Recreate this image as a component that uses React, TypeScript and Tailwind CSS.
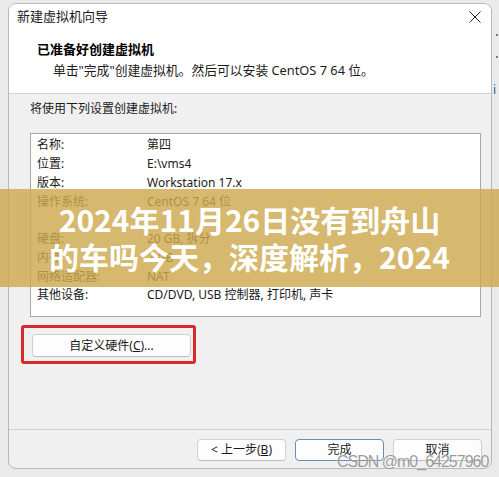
import React from "react";

const rows: [string, string][] = [
  ["名称:", "第四"],
  ["位置:", "E:\\vms4"],
  ["版本:", "Workstation 17.x"],
  ["操作系统:", "CentOS 7 64 位"],
  ["", ""],
  ["硬盘:", "20 GB, 拆分"],
  ["内存:", "2 GB"],
  ["网络适配器:", "NAT"],
  ["其他设备:", "CD/DVD, USB 控制器, 打印机, 声卡"],
];

function WinButton({ children, primary, className = "" }: { children: React.ReactNode; primary?: boolean; className?: string }) {
  return (
    <div
      className={`flex items-center justify-center rounded-[4px] border bg-[#fdfdfd] text-[12px] text-[#1b1b1b] ${
        primary ? "border-[#6a8cb3]" : "border-[#d0d0d0] border-b-[#bdbdbd]"
      } ${className}`}
    >
      {children}
    </div>
  );
}

export default function App() {
  return (
    <div
      className="relative h-[477px] w-[499px] overflow-hidden bg-[#eaeaea]"
      style={{ fontFamily: '"Noto Sans", "Noto Sans CJK SC", sans-serif' }}
    >
      {/* dialog */}
      <div className="ml-[8px] mt-[3px] flex h-[466px] w-[484px] flex-col overflow-hidden rounded-[8px] border border-[#b9b9b9] bg-[#f0f0f0]">
        <div className="h-[90px] border-b border-[#d4d4d4] bg-white">
          <div className="flex h-[26px] items-center justify-between pl-[8px] pr-[10px]">
            <span className="text-[13px] text-[#1b1b1b]">新建虚拟机向导</span>
            <svg width="12" height="12" viewBox="0 0 12 12">
              <path d="M0.5 0.5L11.5 11.5M11.5 0.5L0.5 11.5" stroke="#222" strokeWidth="1" />
            </svg>
          </div>
          <div className="mt-[10px] pl-[28px] text-[13px] font-bold leading-[18px] text-black">已准备好创建虚拟机</div>
          <div className="mt-[3px] pl-[44px] text-[12.8px] leading-[18px] text-[#1b1b1b]">
            单击"完成"创建虚拟机。然后可以安装 CentOS 7 64 位。
          </div>
        </div>

        <div className="flex flex-1 flex-col">
          <div className="pl-[21px] pt-[6px] text-[12px] leading-[18px] text-[#1b1b1b]">将使用下列设置创建虚拟机:</div>
          <div className="ml-[21px] mt-[15px] h-[184px] w-[451px] border border-[#a8a8a8] bg-white pl-[6px] pt-[2px]">
            {rows.map(([k, v], i) => (
              <div key={i} className="flex h-[18.75px] items-center text-[12px] text-[#1b1b1b]">
                <span className="w-[110px]">{k}</span>
                <span>{v}</span>
              </div>
            ))}
          </div>
          <WinButton className="ml-[23px] mt-[17px] h-[23px] w-[159px]">
            自定义硬件(<span className="underline">C</span>)...
          </WinButton>
          <div className="flex-1" />
          <div className="flex h-[39px] justify-end gap-[9px] border-t border-[#cfcfcf] pr-[9px] pt-[9px]">
            <WinButton className="h-[22px] w-[89px]">
              &lt; 上一步(<span className="underline">B</span>)
            </WinButton>
            <WinButton primary className="h-[22px] w-[89px]">完成</WinButton>
            <WinButton className="h-[22px] w-[89px]">取消</WinButton>
          </div>
        </div>
      </div>

      {/* red annotation box */}
      <div className="absolute left-[21px] top-[325px] h-[39px] w-[175px] rounded-[3px] border-[3px] border-[#d52b2b]" />

      {/* window behind, right edge */}
      <div className="absolute left-[496px] top-[34px] h-[2px] w-[2px] rounded-full bg-[#555]" />
      <div className="absolute left-[496px] top-[56px] h-[2px] w-[2px] rounded-full bg-[#555]" />
      <div className="absolute left-[493px] top-[83px] text-[12px] leading-[14px] text-[#2a5a8a]">i</div>

      {/* title band */}
      <div
        className="absolute left-0 right-0 top-[189px] h-[98px] bg-[rgba(205,168,78,0.82)] pt-[12px] text-center text-[30px] font-bold leading-[37px] text-white"
        style={{ fontFamily: '"Noto Sans CJK SC", sans-serif' }}
      >
        <div>2024年11月26日没有到舟山</div>
        <div>的车吗今天，深度解析，2024</div>
      </div>

      {/* watermark */}
      <div
        className="absolute left-[337px] top-[452px] text-[16px] leading-[20px] tracking-[-1px] text-[rgba(120,120,120,0.75)]"
        style={{ fontFamily: '"Liberation Sans", sans-serif', textShadow: "0 0 1px #fff" }}
      >
        CSDN @m0_64257960
      </div>
    </div>
  );
}
